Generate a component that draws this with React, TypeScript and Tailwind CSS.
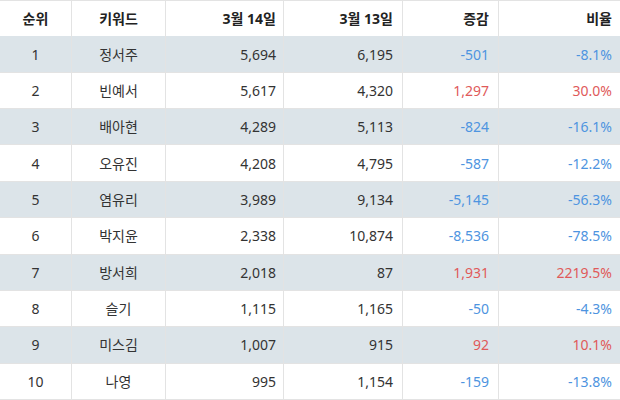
const rows = [
  { rank: 1, name: '정서주', d14: '5,694', d13: '6,195', diff: '-501', rate: '-8.1%' },
  { rank: 2, name: '빈예서', d14: '5,617', d13: '4,320', diff: '1,297', rate: '30.0%' },
  { rank: 3, name: '배아현', d14: '4,289', d13: '5,113', diff: '-824', rate: '-16.1%' },
  { rank: 4, name: '오유진', d14: '4,208', d13: '4,795', diff: '-587', rate: '-12.2%' },
  { rank: 5, name: '염유리', d14: '3,989', d13: '9,134', diff: '-5,145', rate: '-56.3%' },
  { rank: 6, name: '박지윤', d14: '2,338', d13: '10,874', diff: '-8,536', rate: '-78.5%' },
  { rank: 7, name: '방서희', d14: '2,018', d13: '87', diff: '1,931', rate: '2219.5%' },
  { rank: 8, name: '슬기', d14: '1,115', d13: '1,165', diff: '-50', rate: '-4.3%' },
  { rank: 9, name: '미스김', d14: '1,007', d13: '915', diff: '92', rate: '10.1%' },
  { rank: 10, name: '나영', d14: '995', d13: '1,154', diff: '-159', rate: '-13.8%' },
];

const cols = 'grid grid-cols-[72px_94px_118px_119px_96px_121px]';
const cell = 'flex items-center border-r border-[#e3e3e3] last:border-r-0';

export default function App() {
  return (
    <div
      className="w-[620px] h-[400px] flex flex-col bg-white text-[14px] text-[#333]"
      style={{ fontFamily: '"Noto Sans", "Noto Sans CJK KR", sans-serif' }}
    >
      {/* Header */}
      <div className={`${cols} flex-1 font-bold text-[#222] border-t border-[#e3e3e3]`}>
        <div className={`${cell} justify-center`}>순위</div>
        <div className={`${cell} justify-center`}>키워드</div>
        <div className={`${cell} justify-end pr-[7px]`}>3월 14일</div>
        <div className={`${cell} justify-end pr-[9px]`}>3월 13일</div>
        <div className={`${cell} justify-end pr-[9px]`}>증감</div>
        <div className={`${cell} justify-end pr-[8px]`}>비율</div>
      </div>

      {rows.map((r) => {
        const up = !r.diff.startsWith('-');
        const tone = up ? 'text-[#e05a5a]' : 'text-[#4e94e0]';
        return (
          <div
            key={r.rank}
            className={`${cols} flex-1 border-b border-[#e3e3e3] ${r.rank % 2 === 1 ? 'bg-[#dce4e9]' : 'bg-white'}`}
          >
            <div className={`${cell} justify-center`}>{r.rank}</div>
            <div className={`${cell} justify-center`}>{r.name}</div>
            <div className={`${cell} justify-end pr-[7px]`}>{r.d14}</div>
            <div className={`${cell} justify-end pr-[9px]`}>{r.d13}</div>
            <div className={`${cell} justify-end pr-[9px] ${tone}`}>{r.diff}</div>
            <div className={`${cell} justify-end pr-[8px] ${tone}`}>{r.rate}</div>
          </div>
        );
      })}
    </div>
  );
}
